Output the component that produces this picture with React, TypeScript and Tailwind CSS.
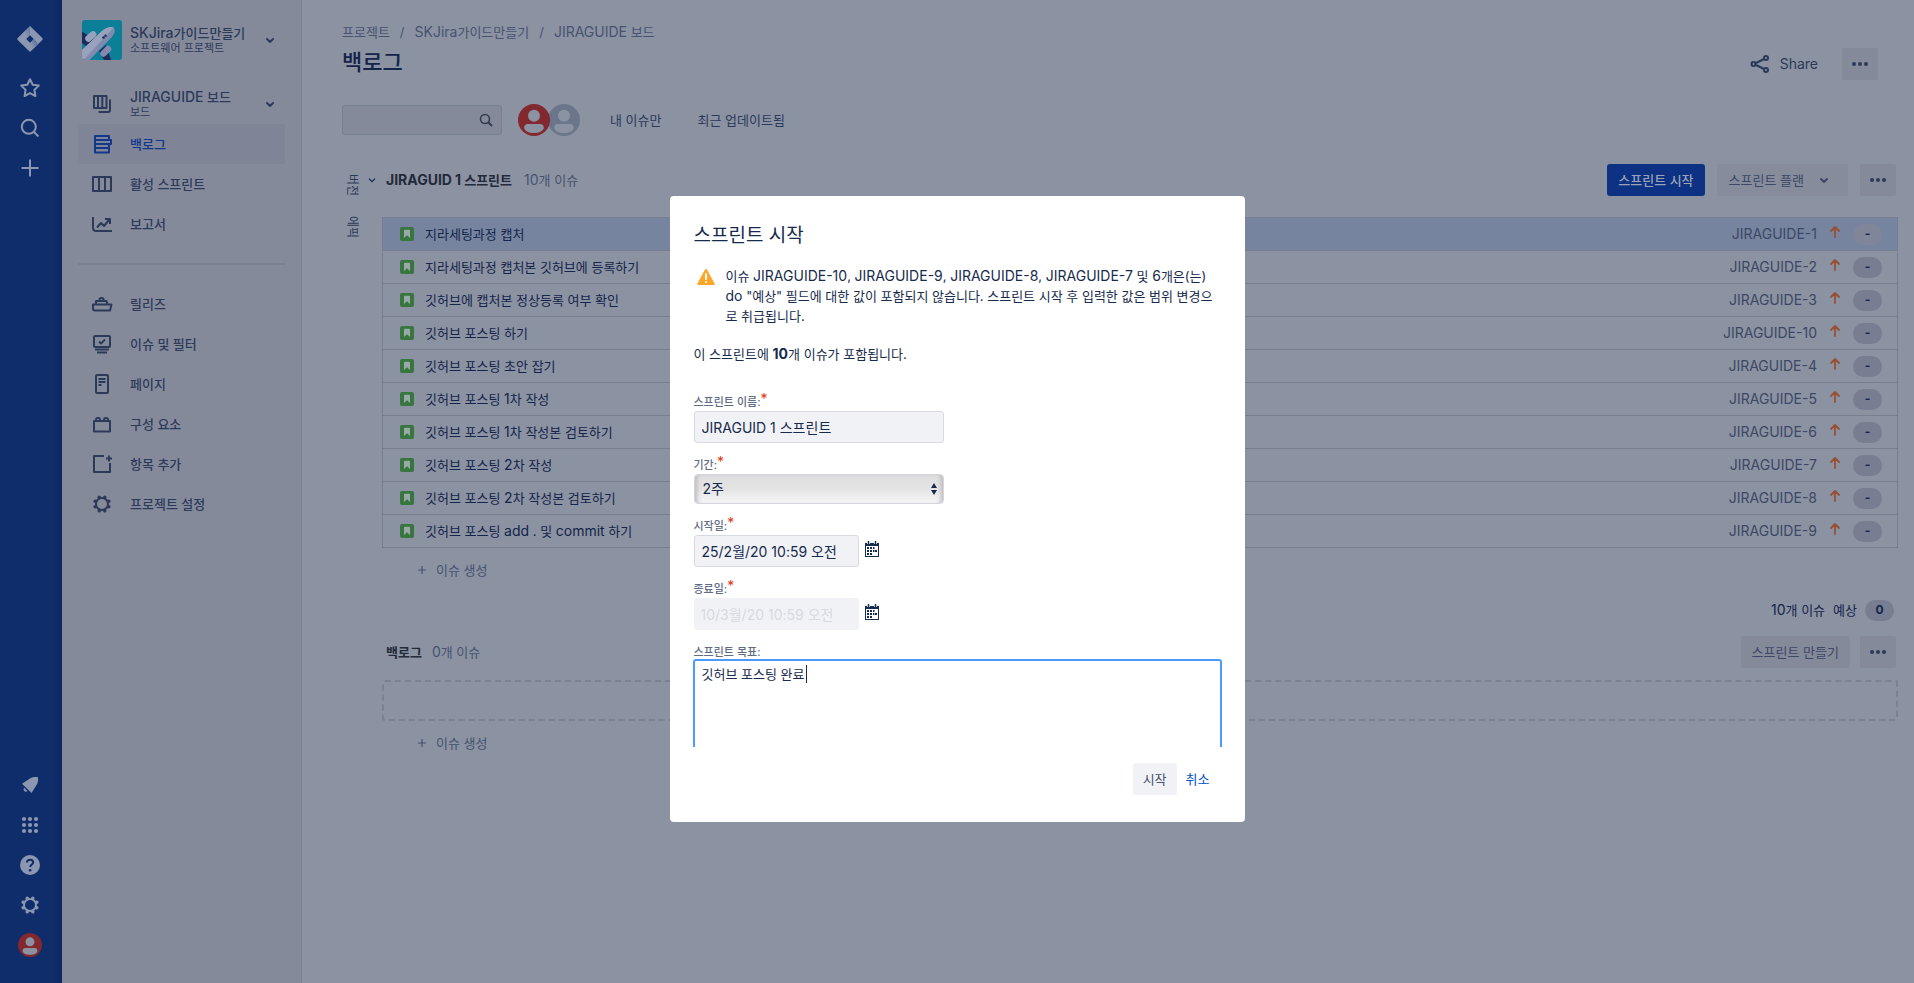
import type { ReactNode } from "react";

type IconProps = { children: ReactNode; size?: string };

function Icon({ children, size = "size-6" }: IconProps) {
  return (
    <svg viewBox="0 0 24 24" className={`${size} shrink-0`} fill="none" stroke="currentColor" strokeWidth="2" strokeLinejoin="round" aria-hidden="true">
      {children}
    </svg>
  );
}

/* Hangul is set a step smaller than Latin so that both scripts look even. */
function Mixed({ children }: { children: string }) {
  return children.split(/([A-Za-z0-9][A-Za-z0-9-]*)/).map((part, i) =>
    i % 2 ? (
      <span key={i} className="text-[14px] leading-none">
        {part}
      </span>
    ) : (
      part
    ),
  );
}

const chevron = <path d="M9 11l3 3 3-3" strokeLinecap="round" />;
const dots = (
  <g fill="currentColor" stroke="none">
    <circle cx="6" cy="12" r="2" />
    <circle cx="12" cy="12" r="2" />
    <circle cx="18" cy="12" r="2" />
  </g>
);
const gear = (
  <>
    <circle cx="12" cy="12" r="6" />
    <g strokeWidth="3.4" strokeLinecap="round">
      <path d="M9.2 5.1v.3M14.8 5.1v.3M9.2 18.6v.3M14.8 18.6v.3M5.1 9.2h.3M5.1 14.8h.3M18.6 9.2h.3M18.6 14.8h.3" />
    </g>
  </>
);

function Person({ size, bg, fg }: { size: string; bg: string; fg: string }) {
  return (
    <svg viewBox="0 0 32 32" className={`${size} shrink-0`} aria-hidden="true">
      <circle cx="16" cy="16" r="16" fill={bg} />
      <circle cx="16" cy="11.8" r="6" fill={fg} />
      <path d="M6.2 23.5c0-2.2 1.4-3.5 3.6-3.5h12.4c2.2 0 3.6 1.3 3.6 3.5 0 3.5-4.6 5.5-9.8 5.5s-9.8-2-9.8-5.5z" fill={fg} />
    </svg>
  );
}

const railTop: { label: string; icon: ReactNode }[] = [
  { label: "별표 표시", icon: <path d="M12 3.2l2.7 5.6 6.1.8-4.4 4.3 1 6.1L12 17.1 6.6 20l1-6.1-4.4-4.3 6.1-.8z" /> },
  { label: "검색", icon: <><circle cx="10.8" cy="10.8" r="7" /><path d="M16 16l4.5 4.5" /></> },
  { label: "만들기", icon: <path d="M12 3.5v17M3.5 12h17" /> },
];

const railBottom: { label: string; icon: ReactNode }[] = [
  {
    label: "알림",
    icon: (
      <g fill="currentColor" stroke="none">
        <path d="M4 10.8L12.7 5c1.5-.9 3.8-1.3 6.6-1 .5 0 .7.3.7.7.3 2.8-.1 5.1-1 6.6L13.5 20z" />
        <path d="M6.2 14.8l3.2 3.1c-.9 1-2.3 1.1-3.1.2-.9-.9-1-2.3-.1-3.3z" />
      </g>
    ),
  },
  {
    label: "앱 전환",
    icon: (
      <g fill="currentColor" stroke="none">
        {[6, 12, 18].map((y) => [6, 12, 18].map((x) => <circle key={`${x}-${y}`} cx={x} cy={y} r="2.1" />))}
      </g>
    ),
  },
  {
    label: "도움말",
    icon: (
      <>
        <circle cx="12" cy="12" r="10" fill="currentColor" stroke="none" />
        <path d="M8.9 9.6c0-1.8 1.3-2.9 3.1-2.9s3.2 1.1 3.2 2.7c0 2.1-3 2.2-3 4.6" stroke="#102d6b" />
        <circle cx="12.1" cy="17.3" r="1.3" fill="#102d6b" stroke="none" />
      </>
    ),
  },
  { label: "설정", icon: gear },
];

const boardNav: { label: string; icon: ReactNode; active?: boolean }[] = [
  {
    label: "백로그",
    active: true,
    icon: <path d="M5 4h14v4H5zM5 12h14v4H5zM5 16h14v4.5H5zM5 8h16v4H5z" />,
  },
  { label: "활성 스프린트", icon: <path d="M3 5h18v14H3zM9 5v14M15 5v14" /> },
  { label: "보고서", icon: <path d="M3 5v11c0 1.7 1.3 3 3 3h16M7 15.5l4-4.5 3 3 5-6M15 7h5v5" /> },
];

const projectNav: { label: string; icon: ReactNode }[] = [
  { label: "릴리즈", icon: <path d="M3 12.5h18.5l-1.5 6H5c-1.2 0-2-1-2-2zM6 12V9h10.5l1 3.5M9.5 9V7.5c0-1 .7-1.5 1.5-1.5h1c.9 0 1.5.6 1.5 1.5V9" /> },
  {
    label: "이슈 및 필터",
    icon: (
      <>
        <rect x="4" y="4" width="16" height="11" rx="1" />
        <path d="M9 9.5l2 2 4-4M5 17.5h14M7 20.5h10" strokeWidth="1.8" />
      </>
    ),
  },
  {
    label: "페이지",
    icon: (
      <>
        <rect x="6" y="3" width="12" height="18" rx="1" />
        <path d="M8.5 7h7M8.5 10h7M8.5 13h3" />
      </>
    ),
  },
  { label: "구성 요소", icon: <path d="M4 9h16v10.5H4zM6 9V7.5C6 6.7 6.6 6 7.4 6h1.2C9.4 6 10 6.7 10 7.5V9M14 9V7.5c0-.8.6-1.5 1.4-1.5h1.2c.8 0 1.4.7 1.4 1.5V9" /> },
  {
    label: "항목 추가",
    icon: (
      <>
        <path d="M14 4H4v16h16V11" />
        <path d="M19 3.5v6M16 6.5h6" />
      </>
    ),
  },
  { label: "프로젝트 설정", icon: gear },
];

const issues: { key: string; title: string }[] = [
  { key: "JIRAGUIDE-1", title: "지라세팅과정 캡처" },
  { key: "JIRAGUIDE-2", title: "지라세팅과정 캡처본 깃허브에 등록하기" },
  { key: "JIRAGUIDE-3", title: "깃허브에 캡처본 정상등록 여부 확인" },
  { key: "JIRAGUIDE-10", title: "깃허브 포스팅 하기" },
  { key: "JIRAGUIDE-4", title: "깃허브 포스팅 초안 잡기" },
  { key: "JIRAGUIDE-5", title: "깃허브 포스팅 1차 작성" },
  { key: "JIRAGUIDE-6", title: "깃허브 포스팅 1차 작성본 검토하기" },
  { key: "JIRAGUIDE-7", title: "깃허브 포스팅 2차 작성" },
  { key: "JIRAGUIDE-8", title: "깃허브 포스팅 2차 작성본 검토하기" },
  { key: "JIRAGUIDE-9", title: "깃허브 포스팅 add . 및 commit 하기" },
];

function Rail() {
  return (
    <nav aria-label="전역" className="flex w-[62px] shrink-0 flex-col items-center justify-between bg-linear-to-r from-[#102d6b] from-85% to-[#0e2761] pt-5 pr-0.5 pb-[18px] text-[#8b96b1]">
      <div className="flex flex-col items-center">
        <a href="#home" aria-label="Jira" className="mb-2.5 flex h-[38px] items-center">
          <svg viewBox="0 0 26 26" className="size-[26px]" aria-hidden="true">
            <defs>
              <linearGradient id="fold" x1="1" y1="0" x2="0.3" y2="0.7">
                <stop offset="0.1" stopColor="#4d6091" />
                <stop offset="1" stopColor="#8b96b1" />
              </linearGradient>
            </defs>
            <path d="M13 0l12.3 12.1c.5.5.5 1.3 0 1.8L13 26 .7 13.9c-.5-.5-.5-1.3 0-1.8z" fill="#8b96b1" />
            <path d="M13 1v8.2L9.3 13 6.5 10.2c-1.2-1.5-1-3 0-4.200z" fill="url(#fold)" opacity="0.5" />
            <path d="M13 25v-8.2l3.700-3.800 2.800 2.800c1.200 1.500 1 3 0 4.200z" fill="url(#fold)" opacity="0.9" />
            <path d="M13 9.2l3.7 3.8-3.7 3.8L9.3 13z" fill="#102d6b" />
          </svg>
        </a>
        {railTop.map((item) => (
          <button key={item.label} aria-label={item.label} className="flex h-10 w-10 items-center justify-center">
            <Icon>{item.icon}</Icon>
          </button>
        ))}
      </div>
      <div className="flex flex-col items-center">
        {railBottom.map((item) => (
          <button key={item.label} aria-label={item.label} className="flex h-10 w-10 items-center justify-center">
            <Icon>{item.icon}</Icon>
          </button>
        ))}
        <button aria-label="프로필" className="flex h-10 w-10 items-center justify-center">
          <Person size="size-6" bg="#82282f" fg="#8b92a1" />
        </button>
      </div>
    </nav>
  );
}

function NavItem({ label, icon, active = false }: { label: string; icon: ReactNode; active?: boolean }) {
  return (
    <a
      href="#nav"
      aria-current={active ? "page" : undefined}
      className={`flex h-10 items-center gap-4 rounded-[3px] px-3 ${active ? "bg-[#7f8497] text-[#12378c]" : ""}`}
    >
      <Icon>{icon}</Icon>
      {label}
    </a>
  );
}

function SwitcherText({ title, subtitle }: { title: string; subtitle: string }) {
  return (
    <span className="flex flex-1 flex-col gap-px pb-0.5">
      <span className="leading-4">
        <Mixed>{title}</Mixed>
      </span>
      <span className="text-[11px] leading-3 font-normal">{subtitle}</span>
    </span>
  );
}

function Sidebar() {
  return (
    <aside className="w-60 shrink-0 border-r border-[#7c8292] bg-[#858a9b] px-4 font-medium text-[#2c3a59]">
      <button className="mt-5 flex h-10 w-full items-center pr-[3px] pl-1 text-left">
        <svg viewBox="0 0 40 40" className="mr-2 size-10 shrink-0 rounded-[3px]" aria-hidden="true">
          <rect width="40" height="40" fill="#0b7f98" />
          <path d="M0 11.5l15 9.5-7 8-8-6z" fill="#1c2c5b" />
          <path d="M17 31l7-6 5 15h-7z" fill="#1c2c5b" />
          <path d="M6.5 18.5l4.5-4" stroke="#98a2bd" strokeWidth="6.5" strokeLinecap="round" />
          <path d="M21.5 33.5l4.5-4.5" stroke="#7f8aae" strokeWidth="6.5" strokeLinecap="round" />
          <path d="M0 30L20 11c4-3.5 9-5 11.5-3.5C34 10 32.5 14 29 18L7.5 40H0z" fill="#7f8aae" />
          <path d="M0 30L20 11c4-3.5 9-5 11.5-3.5L3 38.5l-3 .5z" fill="#98a2bd" />
          <circle cx="21.5" cy="17.5" r="1.3" fill="#1c2c5b" />
          <circle cx="23.5" cy="15.8" r="1.2" fill="#1c2c5b" />
        </svg>
        <SwitcherText title="SKJira가이드만들기" subtitle="소프트웨어 프로젝트" />
        <Icon>{chevron}</Icon>
      </button>
      <button className="mt-6 flex h-10 w-full items-center gap-4 pr-[3px] pl-3 text-left">
        <Icon>
          <path d="M4 4h12.5v12H4zM8 4v12M12.3 4v12M20 7.5V18c0 1.2-.8 2-2 2H8.5" />
        </Icon>
        <SwitcherText title="JIRAGUIDE 보드" subtitle="보드" />
        <Icon>{chevron}</Icon>
      </button>
      <nav aria-label="보드">
        {boardNav.map((item) => (
          <NavItem key={item.label} {...item} />
        ))}
      </nav>
      <hr className="my-[19px] border-t-2 border-[#7b8093]" />
      <nav aria-label="프로젝트">
        {projectNav.map((item) => (
          <NavItem key={item.label} {...item} />
        ))}
      </nav>
    </aside>
  );
}

function MoreButton() {
  return (
    <button aria-label="더 보기" className="flex h-8 w-9 items-center justify-center rounded-[3px] bg-[#858a9b] text-[#2c3a59]">
      <Icon>{dots}</Icon>
    </button>
  );
}

function Badge({ children, soft = false }: { children: ReactNode; soft?: boolean }) {
  return (
    <span className={`flex h-[21px] w-[29px] items-center justify-center rounded-full text-xs font-bold text-[#14244a] ${soft ? "bg-[#80869a]" : "bg-[#787e91]"}`}>
      {children}
    </span>
  );
}

function CreateIssue() {
  return (
    <button className="ml-9 flex h-8 items-center gap-2.5 text-[#465270]">
      <svg viewBox="0 0 8 8" className="size-2" stroke="currentColor" strokeWidth="1.2" aria-hidden="true">
        <path d="M4 0v8M0 4h8" />
      </svg>
      이슈 생성
    </button>
  );
}

function Backlog() {
  return (
    <main className="min-w-0 flex-1 pr-4 pl-10">
      <header className="flex justify-between pt-[22px] pr-5">
        <div>
          <nav aria-label="경로" className="flex gap-2.5 leading-5 text-[#465270]">
            <a href="#projects">프로젝트</a>
            <span>/</span>
            <a href="#project">
              <Mixed>SKJira가이드만들기</Mixed>
            </a>
            <span>/</span>
            <a href="#board">
              <Mixed>JIRAGUIDE 보드</Mixed>
            </a>
          </nav>
          <h1 className="mt-1.5 text-[22px] leading-7 font-medium text-[#14244a]">백로그</h1>
        </div>
        <div className="flex items-start gap-6 pt-[26px]">
          <button className="flex h-8 items-center gap-2 text-sm text-[#2c3a59]">
            <Icon>
              <path d="M6 12l12-6M6 12l12 6" />
              <g fill="#8b92a1">
                <circle cx="5.5" cy="12" r="2" />
                <circle cx="18" cy="6" r="2" />
                <circle cx="18" cy="18" r="2" />
              </g>
            </Icon>
            Share
          </button>
          <MoreButton />
        </div>
      </header>

      <div className="mt-6 flex h-8 items-center text-[#2c3a59]">
        <div className="flex h-[30px] w-40 items-center rounded-[3px] border border-[#7a8093] bg-[#858a9b] pr-2">
          <input type="search" aria-label="보드 검색" className="min-w-0 flex-1 bg-transparent px-2 outline-none" />
          <svg viewBox="0 0 14 14" className="size-3.5" fill="none" stroke="#333c50" strokeWidth="1.6" aria-hidden="true">
            <circle cx="6" cy="6" r="4.5" />
            <path d="M9.3 9.3l3.7 3.7" strokeWidth="2" />
          </svg>
        </div>
        <div className="ml-4 flex">
          <span className="z-10 -mr-0.5 flex">
            <Person size="size-8" bg="#82282f" fg="#8b92a1" />
          </span>
          <Person size="size-8" bg="#6b768b" fg="#8b92a1" />
        </div>
        <button className="ml-[30px]">내 이슈만</button>
        <button className="ml-9">최근 업데이트됨</button>
      </div>

      <div className="mt-7 flex">
        <div className="flex w-10 shrink-0 flex-col gap-5 pt-2.5 pl-0.5 text-xs leading-4 text-[#2c3a59]">
          <button className="w-4 [text-orientation:sideways] [writing-mode:vertical-rl]">버전</button>
          <button className="w-4 [text-orientation:sideways] [writing-mode:vertical-rl]">에픽</button>
        </div>
        <div className="min-w-0 flex-1">
          <section>
            <div className="-ml-5 flex h-8 items-center pr-0.5">
              <button aria-label="접기" className="mr-1 flex h-5 w-5 items-center justify-center text-[#14244a]">
                <svg viewBox="0 0 8 5" className="w-2" fill="none" stroke="currentColor" strokeWidth="1.2" aria-hidden="true">
                  <path d="M1 .7l3 3 3-3" />
                </svg>
              </button>
              <h2 className="font-bold text-[#232a3b]">
                <Mixed>JIRAGUID 1 스프린트</Mixed>
              </h2>
              <span className="ml-3 flex-1 text-[#465270]">
                <Mixed>10개 이슈</Mixed>
              </span>
              <button className="mr-3 h-8 rounded-[3px] bg-[#0d3183] px-[11px] font-medium text-[#9aa3b8]">스프린트 시작</button>
              <button className="mr-3 flex h-8 items-center gap-2 rounded-[3px] bg-[#878c9c] px-3 text-[#3c4865]">
                스프린트 플랜
                <Icon>{chevron}</Icon>
              </button>
              <MoreButton />
            </div>
            <ul className="mt-[21px] border border-[#787e8f]">
              {issues.map((issue, i) => (
                <li
                  key={issue.key}
                  className={`flex h-[33px] items-center border-[#787e8f] pr-[15px] pl-[17px] text-[#14244a] not-last:border-b last:h-8 ${i === 0 ? "bg-[#76849f]" : ""}`}
                >
                  <svg viewBox="0 0 14 14" className="mr-[11px] size-3.5 shrink-0" aria-hidden="true">
                    <rect width="14" height="14" rx="2" fill="#37763f" />
                    <path d="M4 3.5c0-.4.3-.7.7-.7h4.6c.4 0 .7.3.7.7V11L7 8.2 4 11z" fill="#9aa8a8" />
                  </svg>
                  <a href="#issue" className="flex-1 truncate">
                    <Mixed>{issue.title}</Mixed>
                  </a>
                  <a href="#issue" className="text-sm text-[#3c4865]">{issue.key}</a>
                  <svg viewBox="0 0 12 12" className="mx-3 mb-1 size-3 shrink-0" fill="none" stroke="#985035" strokeWidth="1.8" strokeLinecap="round" strokeLinejoin="round" aria-hidden="true">
                    <path d="M6 11V1.500M2 5l4-4 4 4" />
                  </svg>
                  <Badge soft={i === 0}>-</Badge>
                </li>
              ))}
            </ul>
            <div className="mt-1.5">
              <CreateIssue />
            </div>
            <div className="mt-3.5 flex h-5 items-center justify-end gap-2 pr-1 text-[#14244a]">
              <span>
                <Mixed>10개 이슈</Mixed>
              </span>
              <span>예상</span>
              <Badge>0</Badge>
            </div>
          </section>
          <section className="mt-4">
            <div className="flex h-8 items-center pr-0.5 pl-1">
              <h2 className="font-bold text-[#232a3b]">백로그</h2>
              <span className="ml-2.5 flex-1 text-[#465270]">
                <Mixed>0개 이슈</Mixed>
              </span>
              <button className="mr-2.5 h-8 rounded-[3px] bg-[#858a9b] px-[11px] text-[#3c4865]">스프린트 만들기</button>
              <MoreButton />
            </div>
            <div className="mt-3 h-[41px] rounded-[3px] border-2 border-dashed border-[#7b8191]" />
            <div className="mt-1.5">
              <CreateIssue />
            </div>
          </section>
        </div>
      </div>
    </main>
  );
}

function Label({ id, children, required = false }: { id: string; children: ReactNode; required?: boolean }) {
  return (
    <label htmlFor={id} className="flex h-[18px] items-start text-[11px] leading-[18px] font-medium text-[#5e6c84]">
      {children}
      {required && <span className="text-sm leading-3 font-normal text-[#de350b]">*</span>}
    </label>
  );
}

function CalendarButton() {
  return (
    <button type="button" aria-label="날짜 선택" className="-mt-1 ml-[5px] text-[#172b4d]">
      <svg viewBox="0 0 16 16" className="size-4" aria-hidden="true">
        <path d="M1 2h14v14H1zM2 5v10h12V5z" fill="currentColor" fillRule="evenodd" />
        <path d="M3 0h3v3H3zM10 0h3v3h-3z" fill="#fff" />
        <path d="M4 0h1v3H4zM11 0h1v3h-1z" fill="currentColor" stroke="currentColor" strokeWidth="0.5" />
        <g fill="currentColor">
          {[6, 9, 12].map((y) => [3, 6, 9, 11].map((x) => (y === 12 && x > 6) || (y === 6 && x > 9) ? null : <rect key={`${x}-${y}`} x={x} y={y} width={x === 9 ? 1.5 : 2} height="2" />))}
        </g>
      </svg>
    </button>
  );
}

function StartSprintDialog() {
  return (
    <div className="fixed inset-0 z-20 flex items-start justify-center pt-49">
      <div role="dialog" aria-modal="true" aria-labelledby="dialog-title" className="w-[575px] rounded-[4px] bg-white px-6 pb-[27px] text-[#172b4d]">
        <h2 id="dialog-title" className="pt-[26px] text-[19px] leading-7 font-normal">스프린트 시작</h2>
        <form className="pt-4" onSubmit={(e) => e.preventDefault()}>
          <div className="-mx-px h-[481px] overflow-hidden px-px">
            <div className="flex">
              <svg viewBox="0 0 18 16" className="mt-[3px] mr-2.5 ml-0.5 h-4 w-5 shrink-0" aria-hidden="true">
                <path d="M9 0c.5 0 .9.2 1.1.7l7.5 13.7c.4.8-.1 1.6-1 1.6H1.4c-.9 0-1.4-.8-1-1.6L7.900.7C8.100.2 8.500 0 9 0z" fill="#ffa528" />
                <path d="M9 5v5" stroke="#fff" strokeWidth="2" strokeLinecap="round" />
                <circle cx="9" cy="13" r="1.1" fill="#fff" />
              </svg>
              <p className="leading-5 break-all">
                <Mixed>이슈 JIRAGUIDE-10, JIRAGUIDE-9, JIRAGUIDE-8, JIRAGUIDE-7 및 6개은(는)</Mixed>
                <br />
                <Mixed>do "예상" 필드에 대한 값이 포함되지 않습니다. 스프린트 시작 후 입력한 값은 범위 변경으로 취급됩니다.</Mixed>
              </p>
            </div>
            <p className="mt-[18px] leading-5">
              이 스프린트에 <strong className="text-[14px] leading-none">10</strong>개 이슈가 포함됩니다.
            </p>
            <div className="mt-[29px] flex flex-col gap-[13px]">
              <div>
                <Label id="name" required>스프린트 이름:</Label>
                <input id="name" defaultValue="JIRAGUID 1 스프린트" className="block h-8 w-[250px] rounded-[3px] border border-[#d8dae2] bg-[#f1f2f6] px-[7px] text-sm" />
              </div>
              <div>
                <Label id="duration" required>기간:</Label>
                <div className="relative w-[250px]">
                  <select id="duration" defaultValue="2" className="block h-[30px] w-full appearance-none rounded-[4px] border border-[#d5d5dd] bg-linear-to-b from-[#dededf] via-[#e4e4e5] to-[#f6f6f7] px-2 text-sm shadow-[inset_5px_0_4px_-3px_#bcbcc0,inset_-5px_0_4px_-3px_#bcbcc0]">
                    <option value="2">2주</option>
                  </select>
                  <svg viewBox="0 0 8 12" className="pointer-events-none absolute top-[9px] right-1.5 h-3 w-2" fill="#172b4d" aria-hidden="true">
                    <path d="M4 0l3 5H1zM4 12L1 7h6z" />
                  </svg>
                </div>
              </div>
              <div>
                <Label id="start" required>시작일:</Label>
                <div className="flex items-center">
                  <input id="start" defaultValue="25/2월/20 10:59 오전" className="block h-8 w-[165px] rounded-[3px] border border-[#d8dae2] bg-[#f1f2f6] px-[7px] text-sm" />
                  <CalendarButton />
                </div>
              </div>
              <div>
                <Label id="end" required>종료일:</Label>
                <div className="flex items-center">
                  <input id="end" disabled defaultValue="10/3월/20 10:59 오전" className="block h-8 w-[165px] rounded-[3px] bg-[#f1f2f6] px-[7px] text-sm text-[#d7dae0]" />
                  <CalendarButton />
                </div>
              </div>
              <div>
                <Label id="goal">스프린트 목표:</Label>
                <div className="relative -mx-px -mt-0.5">
                  <textarea id="goal" defaultValue="깃허브 포스팅 완료" className="block h-[140px] w-full resize-none rounded-[3px] border-2 border-[#4c9aff] px-[7px] py-[3px] leading-5 outline-none" />
                  <span className="absolute top-1.5 left-[113px] h-[18px] w-px bg-[#172b4d]" />
                </div>
              </div>
            </div>
          </div>
          <div className="mt-4 flex h-8 items-center justify-end gap-[9px] pr-[11px]">
            <button type="submit" className="h-8 rounded-[3px] bg-[#f1f2f6] px-2.5 text-[#42526e]">시작</button>
            <button type="button" className="text-[#0052cc]">취소</button>
          </div>
        </form>
      </div>
    </div>
  );
}

export default function App() {
  return (
    <div className="flex min-h-screen bg-[#8b92a1] font-['Inter','Noto_Sans_CJK_KR',sans-serif] text-[13px] leading-5" lang="ko">
      <Rail />
      <Sidebar />
      <Backlog />
      <StartSprintDialog />
    </div>
  );
}
